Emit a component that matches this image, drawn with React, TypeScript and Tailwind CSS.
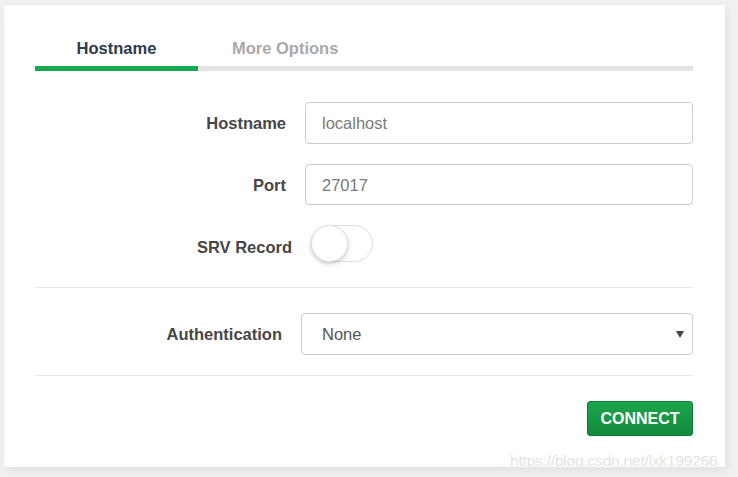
import React from "react";

export default function App() {
  return (
    <div className="relative w-[738px] h-[477px] overflow-hidden bg-[#eff0f2] pl-[4px] pt-[5px] font-['Liberation_Sans',Arial,sans-serif]">
      <div className="w-[721px] h-[462px] bg-white shadow-[2px_3px_8px_rgba(0,0,0,0.07)] pt-[33px] pl-[31px] pr-[32px]">
        {/* Tabs */}
        <div className="flex">
          <div className="w-[163px] text-center text-[16.5px] leading-[20px] font-bold text-[#2d3a48] pb-[8px] border-b-[5px] border-[#13aa52]">
            Hostname
          </div>
          <div className="flex-1 pl-[34px] text-[16.5px] leading-[20px] font-bold text-[#a9a9a9] pb-[8px] border-b-[5px] border-[#e4e4e4]">
            More Options
          </div>
        </div>

        {/* Hostname */}
        <div className="flex items-center mt-[31px] gap-[19px]">
          <label className="w-[251px] text-right text-[16.5px] font-bold text-[#464646] pt-[1px]">Hostname</label>
          <div className="flex-1 h-[42px] border border-[#cccccc] rounded-[4px] flex items-center pl-[16px] pt-[1px] text-[16.5px] text-[#7a7a7a]">
            localhost
          </div>
        </div>

        {/* Port */}
        <div className="flex items-center mt-[20px] gap-[19px]">
          <label className="w-[251px] text-right text-[16.5px] font-bold text-[#464646] pt-[1px]">Port</label>
          <div className="flex-1 h-[41px] border border-[#cccccc] rounded-[4px] flex items-center pl-[16px] pt-[1px] text-[16.5px] text-[#7a7a7a]">
            27017
          </div>
        </div>

        {/* SRV Record */}
        <div className="flex items-center mt-[20px] gap-[19px] h-[37px]">
          <label className="w-[257px] text-right text-[16.5px] font-bold text-[#464646] pt-[7px]">SRV Record</label>
          <div className="relative w-[62px] h-[37px] rounded-full border border-[#dedede] bg-white">
            <div className="absolute left-[-1px] top-[-1px] w-[37px] h-[37px] rounded-full bg-white border border-[#e2e2e2] shadow-[0_2px_4px_rgba(0,0,0,0.22)]"></div>
          </div>
        </div>

        <div className="mt-[25px] h-px bg-[#e8e8e8]"></div>

        {/* Authentication */}
        <div className="flex items-center mt-[25px] gap-[19px]">
          <label className="w-[247px] text-right text-[16.5px] font-bold text-[#464646] pt-[1px]">Authentication</label>
          <div className="relative flex-1 h-[42px] border border-[#cccccc] rounded-[4px] flex items-center pl-[20px] pt-[1px] text-[16.5px] text-[#555555]">
            None
            <svg className="absolute right-[8px] top-[17px]" width="8" height="7" viewBox="0 0 8 7">
              <path d="M0 0 L8 0 L4 7 Z" fill="#444" />
            </svg>
          </div>
        </div>

        <div className="mt-[20px] h-px bg-[#e8e8e8]"></div>

        <div className="flex justify-end mt-[25px]">
          <button className="w-[106px] h-[35px] rounded-[3px] border border-[#0e7a34] bg-gradient-to-b from-[#1ba64c] to-[#128a3c] text-white font-bold text-[16px]">
            CONNECT
          </button>
        </div>
      </div>

      <div className="absolute left-[510px] top-[449px] text-[15.5px] text-[#e3e3e3] font-['Liberation_Sans',Arial,sans-serif] tracking-[-0.2px]">
        https://blog.csdn.net/lxk199266
      </div>
    </div>
  );
}
